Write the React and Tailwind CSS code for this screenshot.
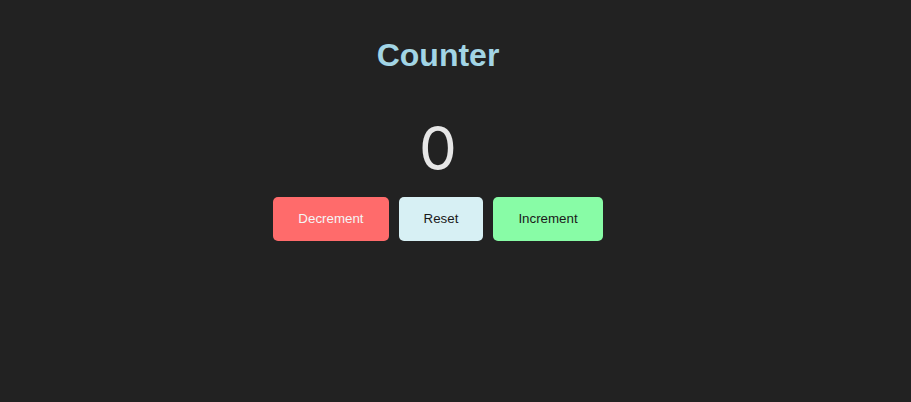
import React, { useState } from 'react';

const Counter = () => {
  const [count, setCount] = useState(0);

  return (
    <div className="min-h-screen bg-[#222222] font-['Liberation_Sans',Arial,sans-serif] pr-[35px]">
      <div className="flex flex-col items-center pt-[37px]">
        <h1 className="text-[32px] leading-[37px] font-bold text-[#a2d5e5]">Counter</h1>
        <div className="mt-[38px] font-['Inter',sans-serif] text-[60px] leading-[72px] text-[#e6e6e6]">{count}</div>
        <div className="mt-[13px] flex gap-[10px]">
          <button
            onClick={() => setCount(count - 1)}
            className="h-[44px] px-[25px] rounded-[5px] bg-[#ff6b6b] text-[13.33px] text-[#f5f5f5]"
          >
            Decrement
          </button>
          <button
            onClick={() => setCount(0)}
            className="h-[44px] px-[25px] rounded-[5px] bg-[#d7f0f4] text-[13.33px] text-[#1a1a1a]"
          >
            Reset
          </button>
          <button
            onClick={() => setCount(count + 1)}
            className="h-[44px] px-[25px] rounded-[5px] bg-[#88fca6] text-[13.33px] text-[#1a1a1a]"
          >
            Increment
          </button>
        </div>
      </div>
    </div>
  );
};

export default Counter;
